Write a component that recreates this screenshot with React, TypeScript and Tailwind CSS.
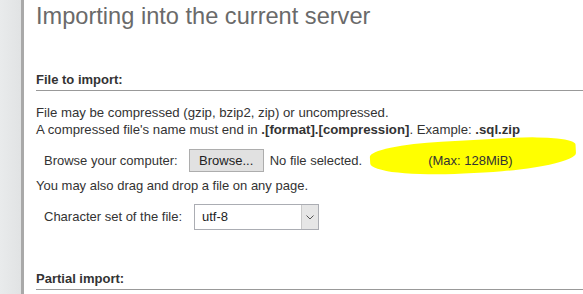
export default function App() {
  return (
    <div className="flex h-[294px] w-[583px] overflow-hidden bg-white font-['Liberation_Sans',Arial,sans-serif] text-[13px] text-[#333]">
      <div className="w-[21px] shrink-0 bg-gradient-to-r from-[#e9ebec] to-[#e1e3e4]" />
      <div className="w-[3px] shrink-0 bg-[#a9a9a9]" />
      <div className="min-w-0 flex-1 pl-[12px]">
        <h2 className="mt-[1px] whitespace-nowrap text-[23.6px] leading-[30px] text-[#6a6a6a]">Importing into the current server</h2>

        <div className="mt-[40px] border-b border-[#999] pb-[2px] text-[13px] font-bold leading-[17px] text-[#333]">File to import:</div>

        <div className="mt-[13px] text-[13.2px] leading-[17px]">
          <p>File may be compressed (gzip, bzip2, zip) or uncompressed.</p>
          <p>
            A compressed file's name must end in <b>.[format].[compression]</b>. Example: <b>.sql.zip</b>
          </p>
        </div>

        <div className="relative mt-[11px] flex h-[23px] items-center whitespace-nowrap">
          <span className="ml-[8px]">Browse your computer:</span>
          <span className="ml-[11px] flex h-[23px] w-[75px] items-center justify-center border border-[#adadad] bg-[#e1e1e1] text-[#222]">Browse...</span>
          <span className="ml-[6px]">No file selected.</span>
          <span className="absolute left-[334px] top-[-9px] h-[33px] w-[206px] rounded-[35%_30%_45%_45%] bg-[#ffff00] -rotate-[3deg]" />
          <span className="relative ml-[66px]">(Max: 128MiB)</span>
        </div>

        <p className="mt-[5px] leading-[17px]">You may also drag and drop a file on any page.</p>

        <div className="mt-[10px] flex h-[26px] items-center whitespace-nowrap">
          <span className="ml-[8px]">Character set of the file:</span>
          <span className="ml-[12px] flex h-[26px] w-[125px] items-stretch border border-[#abadb3] bg-white">
            <span className="flex flex-1 items-center pl-[7px] text-[#222]">utf-8</span>
            <span className="flex w-[17px] items-center justify-center border-l border-[#c9c9c9] bg-[#e6e6e6]">
              <svg width="8" height="5" viewBox="0 0 8 5" fill="none">
                <path d="M0.5 0.5L4 4L7.5 0.5" stroke="#555" strokeWidth="1" />
              </svg>
            </span>
          </span>
        </div>

        <div className="mt-[40px] border-b border-[#999] pb-[2px] text-[13px] font-bold leading-[17px] text-[#333]">Partial import:</div>
      </div>
    </div>
  );
}
